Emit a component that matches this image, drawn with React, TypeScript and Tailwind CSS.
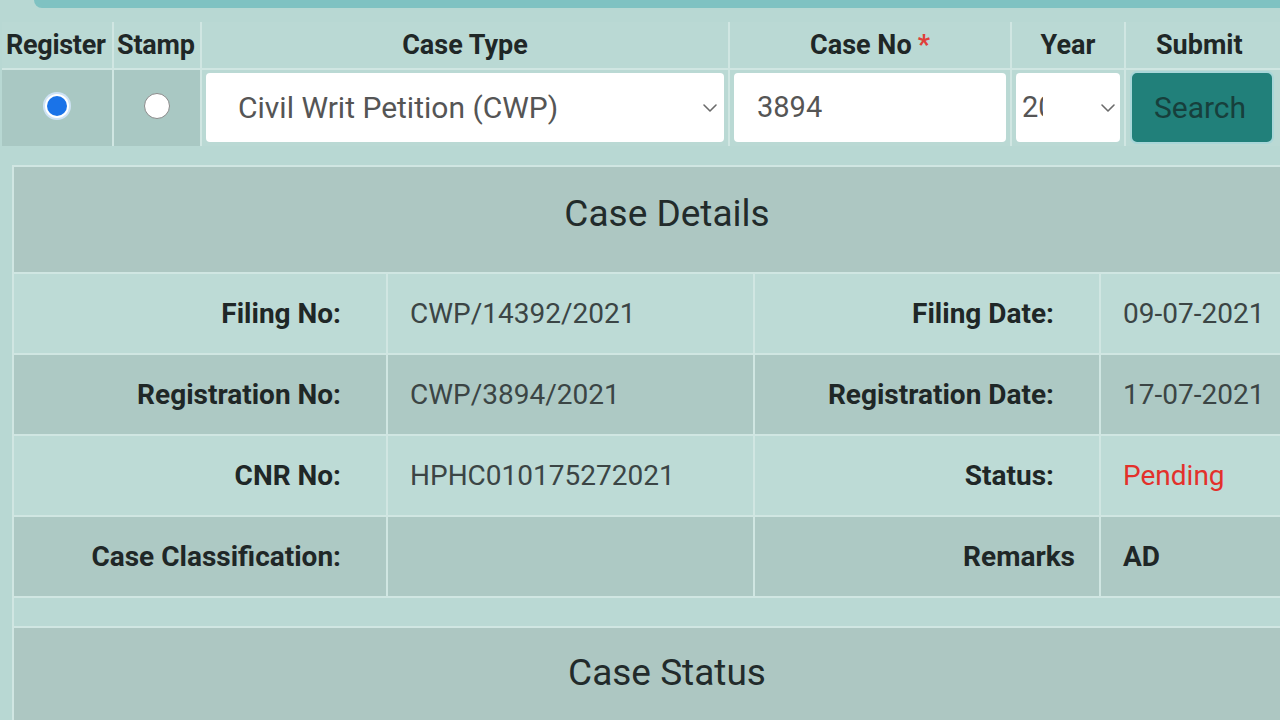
import React from "react";

function Chevron({ className = "" }: { className?: string }) {
  return (
    <svg className={className} width="16" height="10" viewBox="0 0 16 10" fill="none">
      <path d="M2 2l6 6 6-6" stroke="#6b6b6b" strokeWidth="1.6" strokeLinecap="round" strokeLinejoin="round" />
    </svg>
  );
}

function Row({
  l1,
  v1,
  l2,
  v2,
  dark,
  v2Class = "",
  l2Class = "pr-[45px]",
}: {
  l1: string;
  v1: string;
  l2: string;
  v2: string;
  dark?: boolean;
  v2Class?: string;
  l2Class?: string;
}) {
  const bg = dark ? "bg-[#adc9c4]" : "bg-[#bddbd6]";
  return (
    <>
      <div className={`${bg} h-[79px] flex items-center justify-end pr-[45px] font-bold text-[28px] text-[#1f2727]`}>{l1}</div>
      <div className={`${bg} h-[79px] flex items-center pl-[22px] text-[28px] text-[#3b4545]`}>{v1}</div>
      <div className={`${bg} h-[79px] flex items-center justify-end ${l2Class} font-bold text-[28px] text-[#1f2727]`}>{l2}</div>
      <div className={`${bg} h-[79px] flex items-center pl-[22px] text-[28px] text-[#3b4545] ${v2Class}`}>{v2}</div>
    </>
  );
}

export default function App() {
  return (
    <div className="w-[1280px] h-[720px] overflow-hidden bg-[#b8d8d3] font-['Roboto',sans-serif] text-[#1f2727]">
      <div className="h-[8px] ml-[34px] bg-[#7fc2c2] rounded-bl-[14px]" />
      {/* search form */}
      <div className="mt-[14px] ml-[2px] grid grid-cols-[110px_86px_526px_280px_112px_156px] gap-[2px] bg-[#d0e6e2] w-[1290px]">
        <div className="h-[46px] bg-[#bad9d4] flex items-center justify-start pl-[4px] font-bold text-[27px] leading-none tracking-[-0.3px]">Register</div>
        <div className="h-[46px] bg-[#bad9d4] flex items-center justify-start pl-[3px] font-bold text-[27px] leading-none tracking-[-0.2px]">Stamp</div>
        <div className="h-[46px] bg-[#bad9d4] flex items-center justify-center font-bold text-[27px] leading-none">Case Type</div>
        <div className="h-[46px] bg-[#bad9d4] flex items-center justify-center font-bold text-[27px] leading-none">
          Case No<span className="text-[#e0403a] ml-[6px]">*</span>
        </div>
        <div className="h-[46px] bg-[#bad9d4] flex items-center justify-center font-bold text-[27px] leading-none">Year</div>
        <div className="h-[46px] bg-[#bad9d4] flex items-center pl-[30px] font-bold text-[27px] leading-none">Submit</div>

        <div className="h-[76px] bg-[#a9c8c3] flex items-center justify-center pb-[4px]">
          <div className="w-[28px] h-[28px] rounded-full bg-[#cfe3f5] flex items-center justify-center">
            <div className="w-[24px] h-[24px] rounded-full bg-white flex items-center justify-center">
              <div className="w-[20px] h-[20px] rounded-full bg-[#1a73e8]" />
            </div>
          </div>
        </div>
        <div className="h-[76px] bg-[#a9c8c3] flex items-center justify-center pb-[4px]">
          <div className="w-[26px] h-[26px] rounded-full bg-white border border-[#8a8a8a]" />
        </div>
        <div className="h-[76px] bg-[#bad9d4] px-[4px] pt-[3px] pb-[4px]">
          <div className="h-full bg-white rounded-[4px] flex items-center justify-between pl-[32px] pr-[6px] text-[30px] text-[#555]">
            <span>Civil Writ Petition (CWP)</span>
            <Chevron />
          </div>
        </div>
        <div className="h-[76px] bg-[#bad9d4] px-[4px] pt-[3px] pb-[4px]">
          <div className="h-full bg-white rounded-[4px] flex items-center pl-[23px] text-[29px] text-[#555]">3894</div>
        </div>
        <div className="h-[76px] bg-[#bad9d4] px-[4px] pt-[3px] pb-[4px]">
          <div className="h-full bg-white rounded-[4px] flex items-center justify-between pl-[6px] pr-[4px] text-[29px] text-[#555]">
            <span className="w-[21px] overflow-hidden whitespace-nowrap">2021</span>
            <Chevron />
          </div>
        </div>
        <div className="h-[76px] bg-[#bad9d4] pl-[4px] pr-[8px] pt-[1px] pb-[2px]">
          <div className="h-full rounded-[7px] border-2 border-[#a8d6d8] bg-[#21807a] flex items-center justify-center pr-[4px] text-[30px] text-[#173f3c]">
            Search
          </div>
        </div>
      </div>

      {/* details */}
      <div className="mt-[19px] ml-[12px] w-[1300px] bg-[#d0e6e2] pt-[2px] pl-[2px]">
        <div className="h-[105px] bg-[#adc7c2] flex items-center justify-center pl-[8px] pb-[12px] text-[37px] text-[#222b2b]">
          Case Details
        </div>
        <div className="mt-[2px] grid grid-cols-[372px_365px_344px_1fr] gap-[2px]">
          <Row l1="Filing No:" v1="CWP/14392/2021" l2="Filing Date:" v2="09-07-2021" />
          <Row l1="Registration No:" v1="CWP/3894/2021" l2="Registration Date:" v2="17-07-2021" dark />
          <Row l1="CNR No:" v1="HPHC010175272021" l2="Status:" v2="Pending" v2Class="!text-[#e3302b]" />
          <Row l1="Case Classification:" v1="" l2="Remarks" v2="AD" dark v2Class="font-bold !text-[#1f2727]" l2Class="pr-[24px]" />
        </div>
        <div className="mt-[2px] h-[28px] bg-[#bad9d4]" />
        <div className="mt-[2px] h-[100px] bg-[#adc7c2] flex items-start pt-[17px] justify-center pl-[8px] text-[37px] text-[#222b2b]">
          Case Status
        </div>
      </div>
    </div>
  );
}
